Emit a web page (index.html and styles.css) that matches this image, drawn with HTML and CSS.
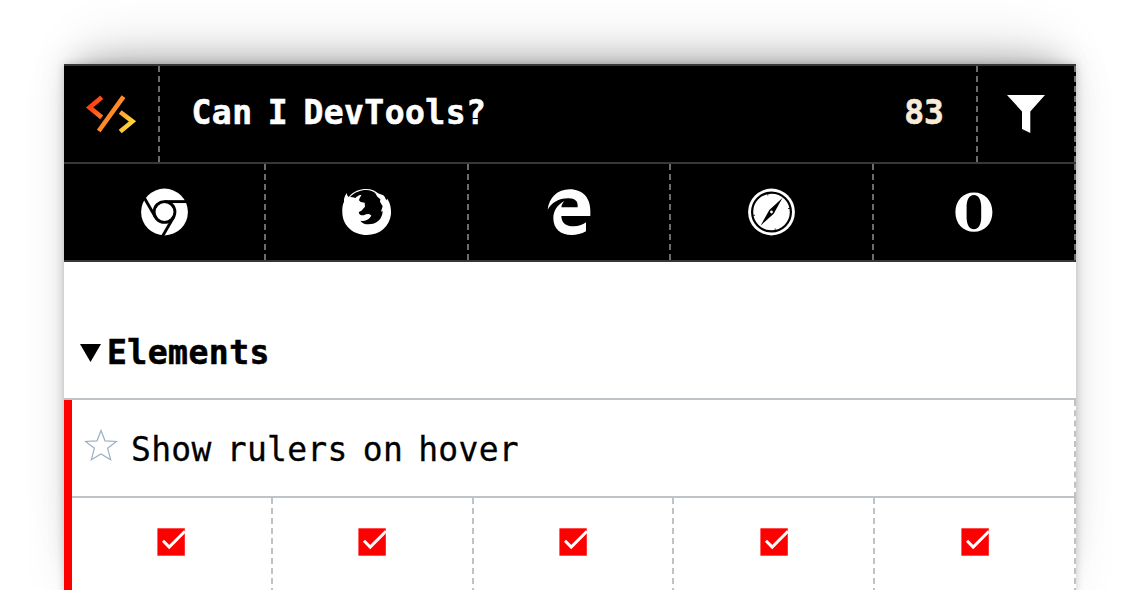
FILE: index.html
```html
<!DOCTYPE html>
<html lang="en">
<head>
<meta charset="utf-8">
<title>Can I DevTools?</title>
<link rel="stylesheet" href="styles.css">
</head>
<body>
<svg class="defs" width="0" height="0">
  <symbol id="check" viewBox="0 0 28 28"><path fill="red" d="M.4.3h27.4v27.4H.4z"/><path d="M6 12.700l6.200 6.300L28 3.200" fill="none" stroke="#fff" stroke-width="3"/></symbol>
</svg>
<main class="panel">
  <header class="header">
    <div class="bar">
      <a class="logo">
        <svg width="52" height="42" viewBox="0 0 52 42">
          <defs><linearGradient id="fire" gradientUnits="userSpaceOnUse" x1="4" y1="6" x2="48" y2="36"><stop offset="0" stop-color="#ff3010"/><stop offset=".5" stop-color="#ff8b27"/><stop offset="1" stop-color="#ffe23c"/></linearGradient></defs>
          <g fill="none" stroke="url(#fire)" stroke-width="4.600"><path d="M16.700 4.200L4.500 14.400l12.200 10M38.500 3.600L13.700 38M35.200 19L47.400 28.400l-12.200 10.200"/></g>
        </svg>
      </a>
      <h1 class="title">Can I DevTools?</h1>
      <span class="count">83</span>
      <button class="filter" aria-label="Filter">
        <svg width="38" height="38" viewBox="0 0 38 38"><path fill="#fff" d="M0 0h38L23.300 16.500V38L15 34V16.500z"/></svg>
      </button>
    </div>
    <div class="browsers">
      <div class="browser">
        <svg width="48" height="48" viewBox="0 0 48 48"><circle cx="24.500" cy="24" r="23.400" fill="#fff"/><g fill="none" stroke="#000" stroke-width="2.900"><circle cx="24.500" cy="24" r="10.400"/><path d="M24.500 13.600H49"/><path d="M24.500 13.600H49" transform="rotate(120 24.500 24)"/><path d="M24.500 13.600H49" transform="rotate(240 24.500 24)"/></g></svg>
      </div>
      <div class="browser">
        <svg width="50" height="48" viewBox="36 23 150 144"><path fill="#fff" fill-rule="evenodd" d="M51 38C50 44 53 48 56 50C70 33 90 26 108 26C125 26 137 32 144 39L160 45C164 49 167 55 169 60L172 55C181 68 184 85 183 102C178 140 150 164 110 164C70 164 38 136 37 98C36 82 38 72 42 64C41 55 45 44 51 38ZM60 50C75 35 92 29 108 29C121 29 131 34 136 39L142 49L151 57L150 64L158 78L153 94L158 92C157 117 140 132 115 132C105 132 95 128 91 121C104 124 112 119 119 113L124 106C120 99 109 100 103 104C96 107 88 103 86 97C88 92 94 93 97 88L105 79L104 67L92 65L87 60C88 53 92 49 94 43C84 45 80 49 76 53C71 51 66 50 60 50Z"/></svg>
      </div>
      <div class="browser">
        <svg width="48" height="48" viewBox="30 23 144 144"><path fill="#fff" d="M38 88C42 53 67 27 104 27C145 27 166 55 166 90V107H79C79 129 95 138 115 138C132 138 145 132 153 126V153C139 161 125 164 110 164C76 164 55 145 55 113C55 91 68 73 88 62C82 69 80 74 79 81H128C130 62 119 54 102 54C72 53 50 67 38 88Z"/></svg>
      </div>
      <div class="browser">
        <svg width="48" height="48" viewBox="-.5 0 48 48"><circle cx="24" cy="24" r="23.400" fill="#fff"/><circle cx="24" cy="24" r="19.400" fill="none" stroke="#000" stroke-width="2.200"/><path d="M34.900 10L21.800 22.100L13.200 37.400L26.200 25.700z"/><circle cx="24" cy="24" r="1.400" fill="#fff"/><path stroke="#000" stroke-width=".8" d="M20.300 5v2.500M27.700 40.500v2.500M5 27.300h2.500M40.500 20.500h2.500"/></svg>
      </div>
      <div class="browser">
        <svg width="48" height="48" viewBox=".6 0 48 48"><path fill="#fff" fill-rule="evenodd" d="M24.500 4.600c10.900 0 18.500 8.200 18.500 19.600s-7.600 19.500-18.500 19.500S6 35.600 6 24.200 13.600 4.600 24.500 4.600zM24.500 7C19.500 7 17.200 12.500 17.200 19v10C17.200 36 19.500 41.200 24.500 41.200S31.800 36 31.800 29V19C31.800 12.500 29.500 7 24.500 7z"/></svg>
      </div>
    </div>
  </header>
  <section class="group">
    <h2 class="group-title"><svg width="21" height="18" viewBox="0 0 21 18"><path d="M0 0h21L10.500 18z"/></svg><span>Elements</span></h2>
    <article class="feature">
      <h3 class="feature-title">
        <svg class="star" width="34" height="33" viewBox="0 0 34 33"><path d="M17 1.500L21 11.800l11.500.6-8.900 6.800 3.100 11.500L17 25l-9.700 5.700 3.100-11.500-8.900-6.800 11.500-.6z" fill="none" stroke="#9bafc4" stroke-width="1.200"/></svg>
        <span>Show rulers on hover</span>
      </h3>
      <div class="support">
        <div class="cell"><svg width="28" height="28"><use href="#check"/></svg></div>
        <div class="cell"><svg width="28" height="28"><use href="#check"/></svg></div>
        <div class="cell"><svg width="28" height="28"><use href="#check"/></svg></div>
        <div class="cell"><svg width="28" height="28"><use href="#check"/></svg></div>
        <div class="cell"><svg width="28" height="28"><use href="#check"/></svg></div>
      </div>
    </article>
  </section>
</main>
</body>
</html>
```

FILE: styles.css
```css
* { box-sizing: border-box; }
html, body { height: 100%; }
body {
  margin: 0;
  padding: 64px 64px 0;
  overflow: hidden;
  background: #fff;
  font: 33px/40px "DejaVu Sans Mono", monospace;
  word-spacing: -5px;
}
svg { display: block; flex: none; }
.defs { position: absolute; }
h1, h2, h3 { margin: 0; font-size: inherit; }
.panel {
  height: 530px;
  background: #fff;
  box-shadow: 0 0 8px rgba(0, 0, 0, .18), 0 0 48px rgba(0, 0, 0, .06), 0 -36px 56px -24px rgba(0, 0, 0, .16), 0 -14px 28px -14px rgba(0, 0, 0, .24);
}
.header { background: #000; color: #fff; border-top: 2px solid #363838; }
.bar, .browsers { display: flex; height: 98px; border-bottom: 2px solid #363838; }
.logo { display: flex; width: 96px; align-items: center; padding-left: 21px; border-right: 2px dashed #6c6c6c; }
.title, .count, .group-title { font-weight: bold; -webkit-text-stroke: .6px; }
.title { flex: 1; padding: 27px 0 0 31.500px; letter-spacing: .45px; }
.count { padding: 27px 32px 0 0; border-right: 2px dashed #6c6c6c; color: #faebd7; }
.filter { display: flex; width: 98px; align-items: center; justify-content: center; padding: 0; background: none; border: 0; border-right: 2px dashed #6c6c6c; }
.browser { display: flex; flex: 1; align-items: center; justify-content: center; border-right: 2px dashed #6c6c6c; }
.group-title { display: flex; height: 138px; padding: 70px 0 0 16px; gap: 6px; border-bottom: 2px solid #bdc3c7; letter-spacing: .5px; }
.group-title svg { margin-top: 12px; }
.group-title span { padding-top: 1px; }
.feature { border-left: 8px solid red; }
.feature-title { display: flex; height: 98px; padding-left: 12px; gap: 13px; border-right: 2px dashed #bdc3c7; border-bottom: 2px solid #bdc3c7; font-weight: normal; letter-spacing: .28px; -webkit-text-stroke: .3px; }
.feature-title span { padding-top: 30px; }
.star { margin-top: 29px; }
.support { display: flex; height: 96px; }
.cell { display: flex; flex: 1; justify-content: center; padding-top: 30px; border-right: 2px dashed #bdc3c7; }
```
